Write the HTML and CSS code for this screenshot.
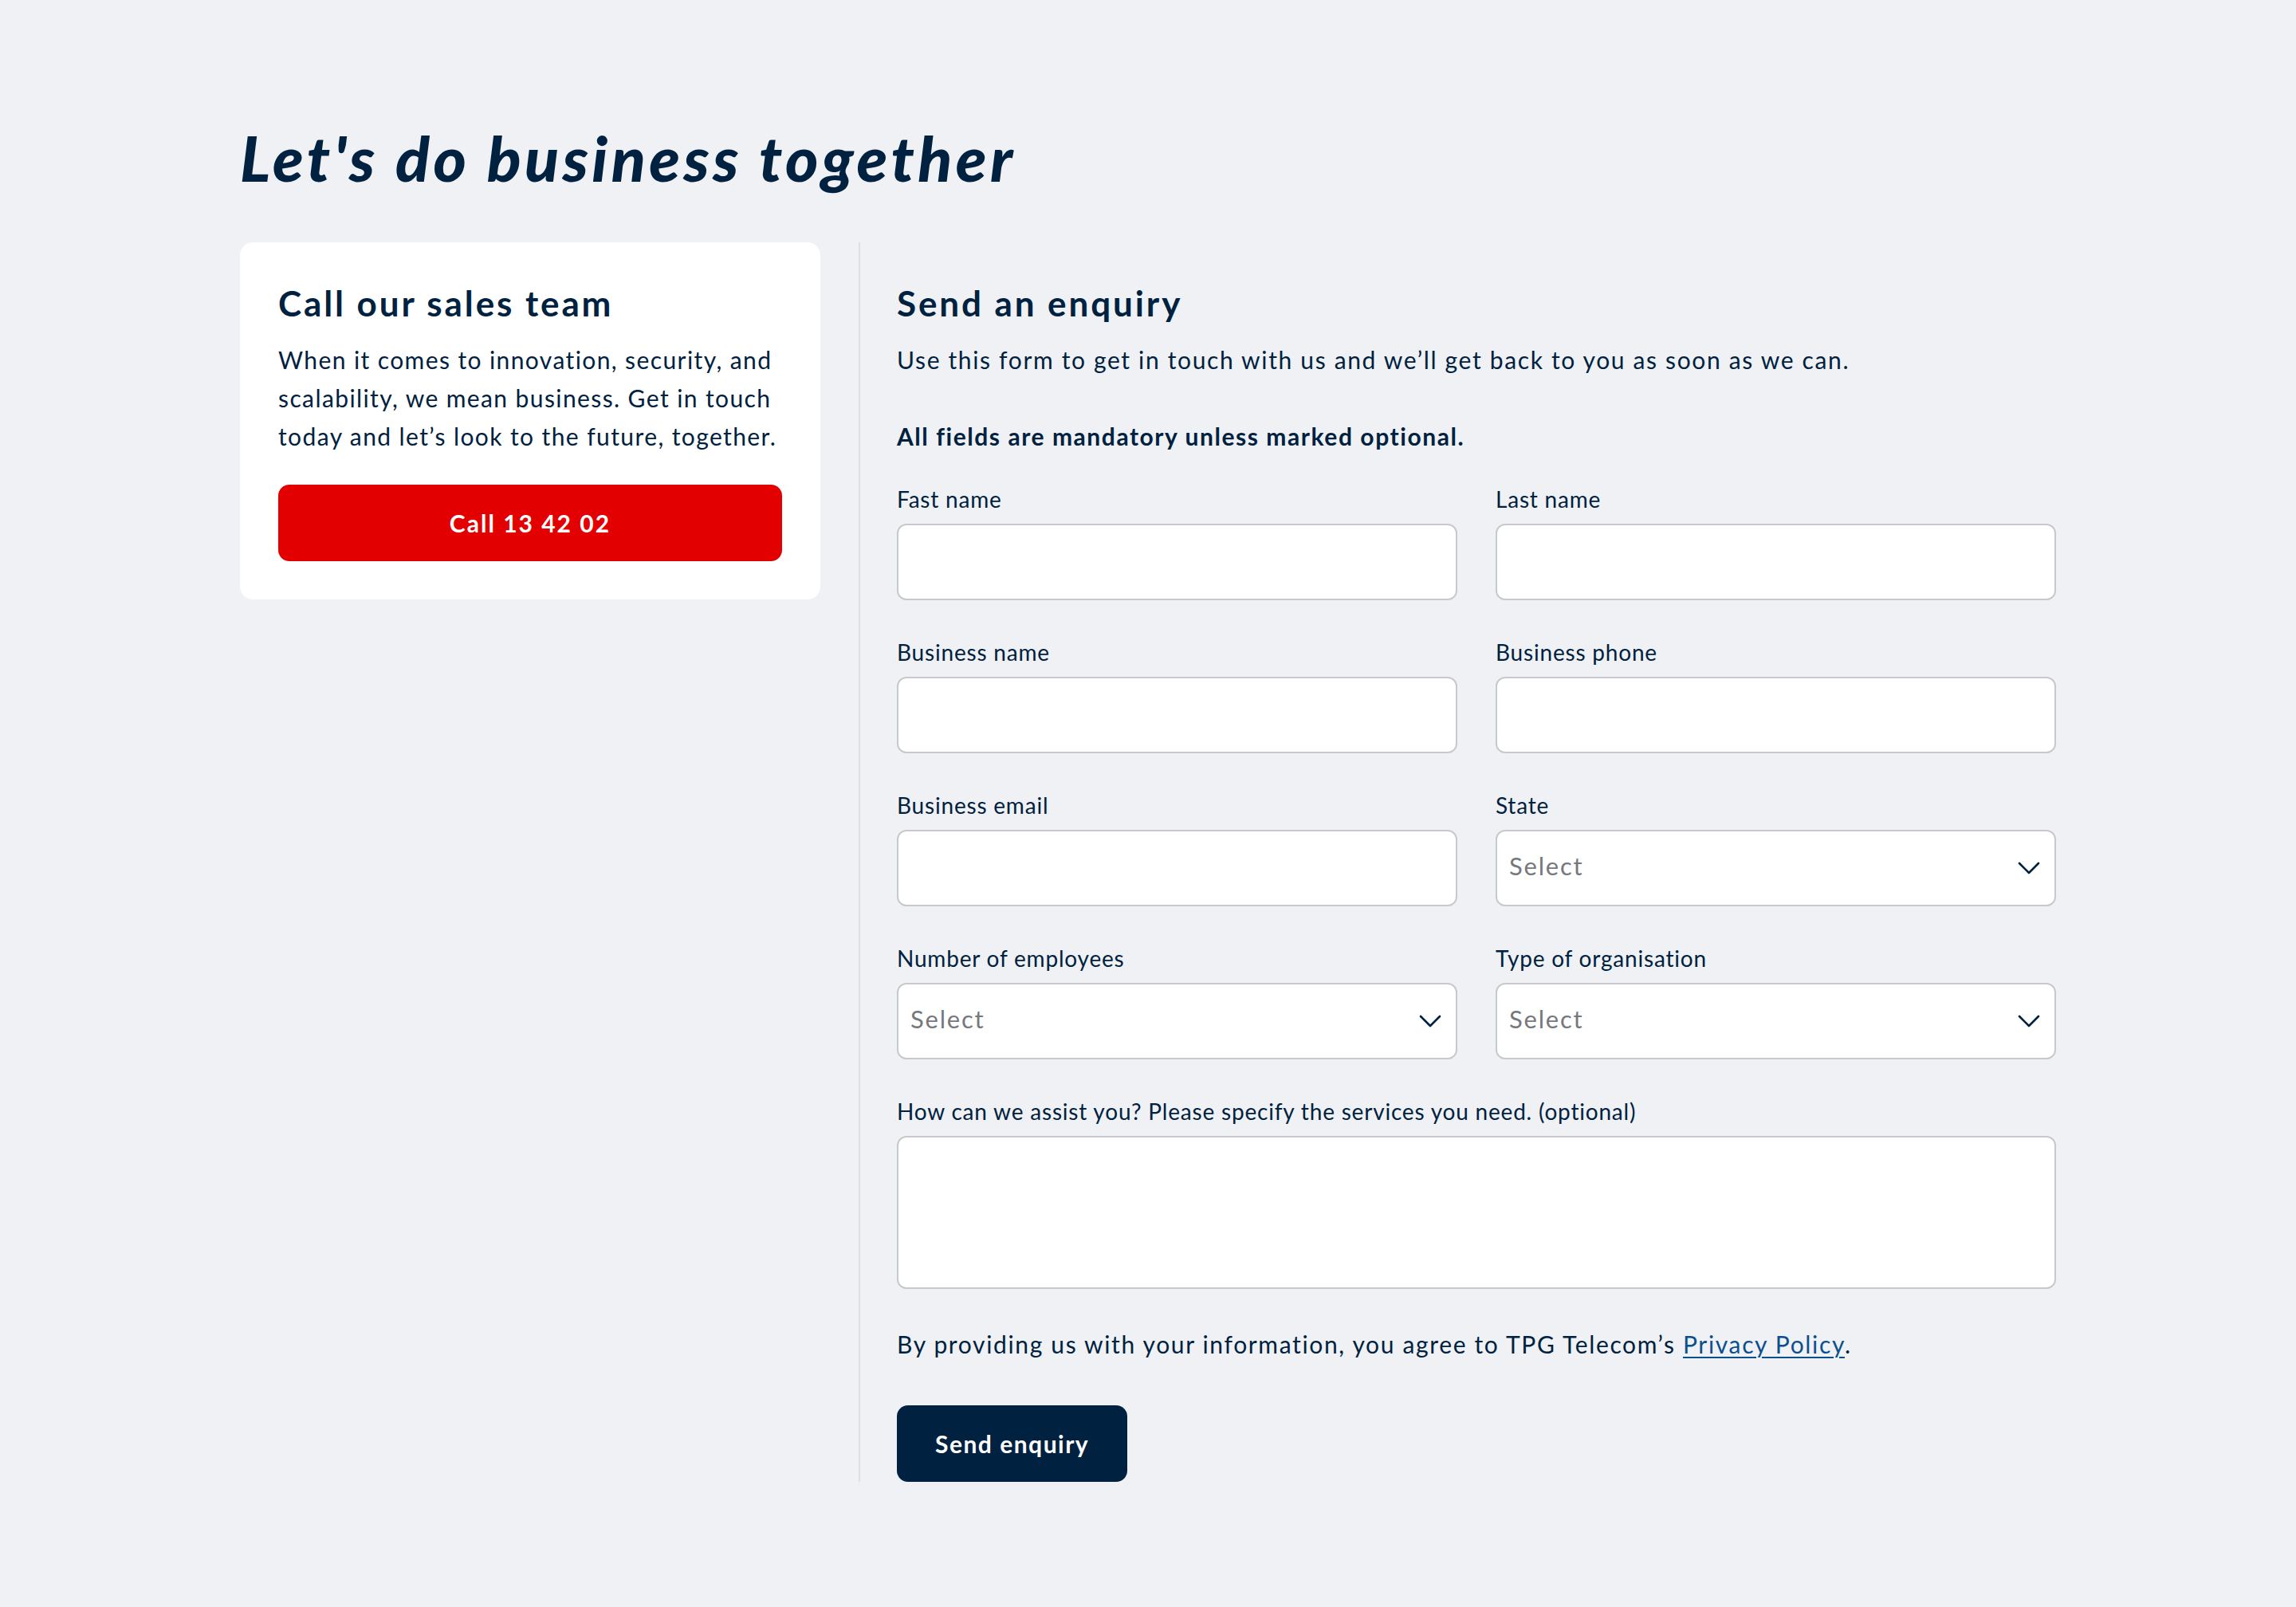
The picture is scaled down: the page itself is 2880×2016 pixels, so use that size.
FILE: index.html
```html
<!DOCTYPE html>
<html lang="en">
<head>
<meta charset="utf-8">
<title>Let's do business together</title>
<link rel="stylesheet" href="styles.css">
</head>
<body>
<main class="page">
  <h1 class="title">Let's do business together</h1>
  <div class="layout">
    <aside class="sales-card">
      <h2 class="heading">Call our sales team</h2>
      <p class="body-text card-text">When it comes to innovation, security, and scalability, we mean business. Get in touch today and let’s look to the future, together.</p>
      <a class="btn-call" href="#">Call 13 42 02</a>
    </aside>
    <section class="enquiry">
      <h2 class="heading">Send an enquiry</h2>
      <p class="body-text">Use this form to get in touch with us and we’ll get back to you as soon as we can.</p>
      <p class="mandatory">All fields are mandatory unless marked optional.</p>
      <form class="fields">
        <div class="field">
          <label class="label" for="fname">Fast name</label>
          <input class="control" id="fname" type="text">
        </div>
        <div class="field">
          <label class="label" for="lname">Last name</label>
          <input class="control" id="lname" type="text">
        </div>
        <div class="field">
          <label class="label" for="bname">Business name</label>
          <input class="control" id="bname" type="text">
        </div>
        <div class="field">
          <label class="label" for="bphone">Business phone</label>
          <input class="control" id="bphone" type="text">
        </div>
        <div class="field">
          <label class="label" for="bemail">Business email</label>
          <input class="control" id="bemail" type="text">
        </div>
        <div class="field">
          <label class="label" for="state">State</label>
          <div class="select-wrap">
            <select class="control select" id="state"><option>Select</option></select>
            <svg class="chevron" width="28" height="16" viewBox="0 0 28 16"><path d="M2 2 L14 14 L26 2" fill="none" stroke="#00213f" stroke-width="2.6" stroke-linecap="round" stroke-linejoin="round"/></svg>
          </div>
        </div>
        <div class="field">
          <label class="label" for="emp">Number of employees</label>
          <div class="select-wrap">
            <select class="control select" id="emp"><option>Select</option></select>
            <svg class="chevron" width="28" height="16" viewBox="0 0 28 16"><path d="M2 2 L14 14 L26 2" fill="none" stroke="#00213f" stroke-width="2.6" stroke-linecap="round" stroke-linejoin="round"/></svg>
          </div>
        </div>
        <div class="field">
          <label class="label" for="org">Type of organisation</label>
          <div class="select-wrap">
            <select class="control select" id="org"><option>Select</option></select>
            <svg class="chevron" width="28" height="16" viewBox="0 0 28 16"><path d="M2 2 L14 14 L26 2" fill="none" stroke="#00213f" stroke-width="2.6" stroke-linecap="round" stroke-linejoin="round"/></svg>
          </div>
        </div>
        <div class="field field-wide">
          <label class="label" for="msg">How can we assist you? Please specify the services you need. (optional)</label>
          <textarea class="control textarea" id="msg"></textarea>
        </div>
      </form>
      <p class="body-text privacy">By providing us with your information, you agree to TPG Telecom’s <a class="link" href="#">Privacy Policy</a>.</p>
      <button class="btn-send" type="button">Send enquiry</button>
    </section>
  </div>
</main>
</body>
</html>
```

FILE: styles.css
```css
* { box-sizing: border-box; }

html, body {
  margin: 0;
  padding: 0;
  background: #eff1f5;
}

body {
  font-family: Lato, "Noto Sans", sans-serif;
  color: #00213f;
}

.page {
  width: 2278px;
  margin: 0 auto;
  padding-top: 151px;
}

.title {
  margin: 0 0 59px;
  font-size: 79px;
  line-height: 94px;
  font-weight: 900;
  font-style: italic;
  color: #00213f;
  letter-spacing: 4.5px;
}

.layout {
  display: flex;
  align-items: flex-start;
}

.sales-card {
  flex: 0 0 728px;
  background: #ffffff;
  border-radius: 16px;
  padding: 48px 48px 48px;
}

.heading {
  margin: 0 0 19px;
  font-size: 44px;
  line-height: 56px;
  font-weight: 700;
  color: #00213f;
  letter-spacing: 2.9px;
}

.body-text {
  margin: 0;
  font-size: 30px;
  line-height: 48px;
  font-weight: 400;
  color: #00213f;
  letter-spacing: 1.65px;
}

.card-text {
  letter-spacing: 1.4px;
  margin-right: -6px;
}

.btn-call {
  display: flex;
  align-items: center;
  justify-content: center;
  height: 96px;
  margin-top: 37px;
  background: #e30000;
  color: #ffffff;
  border-radius: 14px;
  font-size: 30px;
  font-weight: 700;
  letter-spacing: 2px;
  text-decoration: none;
}

.enquiry {
  flex: 1;
  margin-left: 48px;
  border-left: 2px solid #dde0e5;
  padding: 48px 0 0 46px;
}

.mandatory {
  margin: 48px 0 0;
  font-size: 30px;
  line-height: 48px;
  font-weight: 700;
  letter-spacing: 1.55px;
}

.fields {
  display: grid;
  grid-template-columns: 1fr 1fr;
  column-gap: 48px;
  row-gap: 45px;
  margin-top: 35px;
}

.field {
  display: flex;
  flex-direction: column;
  gap: 11px;
}

.field-wide {
  grid-column: 1 / span 2;
}

.label {
  font-size: 28px;
  line-height: 40px;
  color: #00213f;
  letter-spacing: 0.8px;
}

.control {
  display: block;
  width: 100%;
  height: 96px;
  margin: 0;
  background: #ffffff;
  border: 2px solid #c6c9cd;
  border-radius: 12px;
  font-family: Lato, "Noto Sans", sans-serif;
  font-size: 31px;
  color: #00213f;
  padding: 0 16px;
  outline: none;
}

.select-wrap {
  position: relative;
}

.select {
  appearance: none;
  -webkit-appearance: none;
  color: #75787c;
  letter-spacing: 1.8px;
  padding: 0 64px 6px 15px;
}

.chevron {
  position: absolute;
  right: 20px;
  top: 40px;
  pointer-events: none;
}

.textarea {
  height: 192px;
  resize: none;
  padding: 16px;
}

.privacy {
  margin-top: 45px;
}

.link {
  color: #0b4f8f;
  text-decoration: underline;
  text-underline-offset: 4px;
  text-decoration-thickness: 2px;
}

.btn-send {
  display: block;
  height: 96px;
  margin-top: 53px;
  padding: 0 48px;
  background: #00213f;
  color: #ffffff;
  border: none;
  border-radius: 14px;
  font-family: Lato, "Noto Sans", sans-serif;
  font-size: 30px;
  font-weight: 700;
  letter-spacing: 1.5px;
}
```
